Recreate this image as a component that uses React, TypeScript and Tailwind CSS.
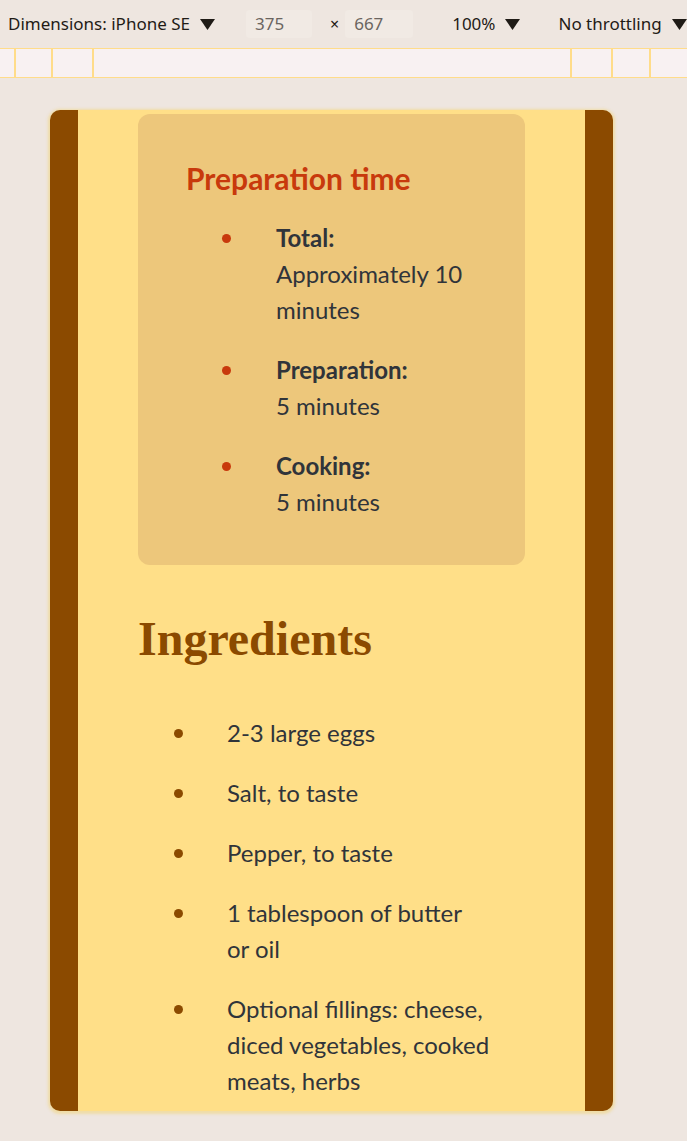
import React from "react";

const prepItems = [
  { label: "Total:", value: "Approximately 10 minutes" },
  { label: "Preparation:", value: "5 minutes" },
  { label: "Cooking:", value: "5 minutes" },
];

const ingredients = [
  "2-3 large eggs",
  "Salt, to taste",
  "Pepper, to taste",
  "1 tablespoon of butter or\u00a0oil",
  "Optional fillings: cheese, diced vegetables, cooked meats, herbs",
];

const Caret = () => (
  <svg width="15" height="11" viewBox="0 0 15 11" className="shrink-0">
    <path d="M0 0 H15 L7.5 11 Z" fill="#1f1b16" />
  </svg>
);

const Toolbar = () => {
  return (
    <div className="flex h-12 items-center whitespace-nowrap text-[17px] text-[#1f1b16] font-['Noto_Sans',sans-serif]">
      <span className="ml-2 shrink-0">Dimensions: iPhone SE</span>
      <span className="ml-[10px] shrink-0">
        <Caret />
      </span>
      <div className="ml-[31px] flex h-[28px] w-[66px] shrink-0 items-center rounded bg-[#f1eae4] pl-[9px] text-[#6b6560]">
        375
      </div>
      <span className="ml-[18px] shrink-0 text-[16px]">×</span>
      <div className="ml-[6px] flex h-[28px] w-[68px] shrink-0 items-center rounded bg-[#f1eae4] pl-[9px] text-[#6b6560]">
        667
      </div>
      <span className="ml-[39px] shrink-0">100%</span>
      <span className="ml-[10px] shrink-0">
        <Caret />
      </span>
      <span className="ml-[38px] shrink-0">No throttling</span>
      <span className="ml-[10px] shrink-0">
        <Caret />
      </span>
    </div>
  );
};

const Ruler = () => {
  return (
    <div className="flex h-[30px] border-y border-[#ffdc8a] bg-[#f8f1f2]">
      <div className="ml-[14px] w-[37px] border-l-2 border-[#ffdc8a]" />
      <div className="w-[41px] border-l-2 border-[#ffdc8a]" />
      <div className="w-[478px] border-l-2 border-[#ffdc8a]" />
      <div className="w-[41px] border-l-2 border-[#ffdc8a]" />
      <div className="w-[38px] border-l-2 border-[#ffdc8a]" />
      <div className="flex-1 border-l-2 border-[#ffdc8a]" />
    </div>
  );
};

export default function App() {
  return (
    <div className="h-[1141px] w-[687px] overflow-hidden bg-[#eee6e0]">
      <Toolbar />
      <Ruler />
      <div className="ml-[50px] mt-[32px] flex h-[1001px] w-[563px] overflow-hidden rounded-[10px] bg-[#8b4a00] shadow-[0_1px_3px_2px_rgba(240,218,160,0.9)]">
        <div className="w-[28px] shrink-0" />
        <div className="flex-1 overflow-hidden bg-[#ffdf88] px-[60px] pt-[4px] font-['Lato',sans-serif] text-[24px] leading-[36px] text-[#30343a]">
          <section className="rounded-xl bg-[#edc77b] px-12 pb-[45px] pt-[49px]">
            <h3 className="text-[30px] font-bold leading-[30px] text-[#c8390c]">
              Preparation time
            </h3>
            <ul className="mt-[27px] space-y-6">
              {prepItems.map((item) => (
                <li key={item.label} className="flex">
                  <div className="flex h-9 w-[90px] shrink-0 items-center">
                    <span className="ml-[36px] h-[9px] w-[9px] rounded-full bg-[#c8390c]" />
                  </div>
                  <div>
                    <strong className="block font-bold">{item.label}</strong>
                    <span>{item.value}</span>
                  </div>
                </li>
              ))}
            </ul>
          </section>

          <h2 className="mt-[45px] font-['Liberation_Serif',serif] text-[48px] font-bold leading-[58px] text-[#8b4a00]">
            Ingredients
          </h2>
          <ul className="mt-[47px] space-y-6">
            {ingredients.map((ing) => (
              <li key={ing} className="flex">
                <div className="flex h-9 w-[89px] shrink-0 items-center">
                  <span className="ml-[36px] h-[9px] w-[9px] rounded-full bg-[#8b4a00]" />
                </div>
                <div className="w-[272px]">{ing}</div>
              </li>
            ))}
          </ul>
        </div>
        <div className="w-[28px] shrink-0" />
      </div>
    </div>
  );
}
